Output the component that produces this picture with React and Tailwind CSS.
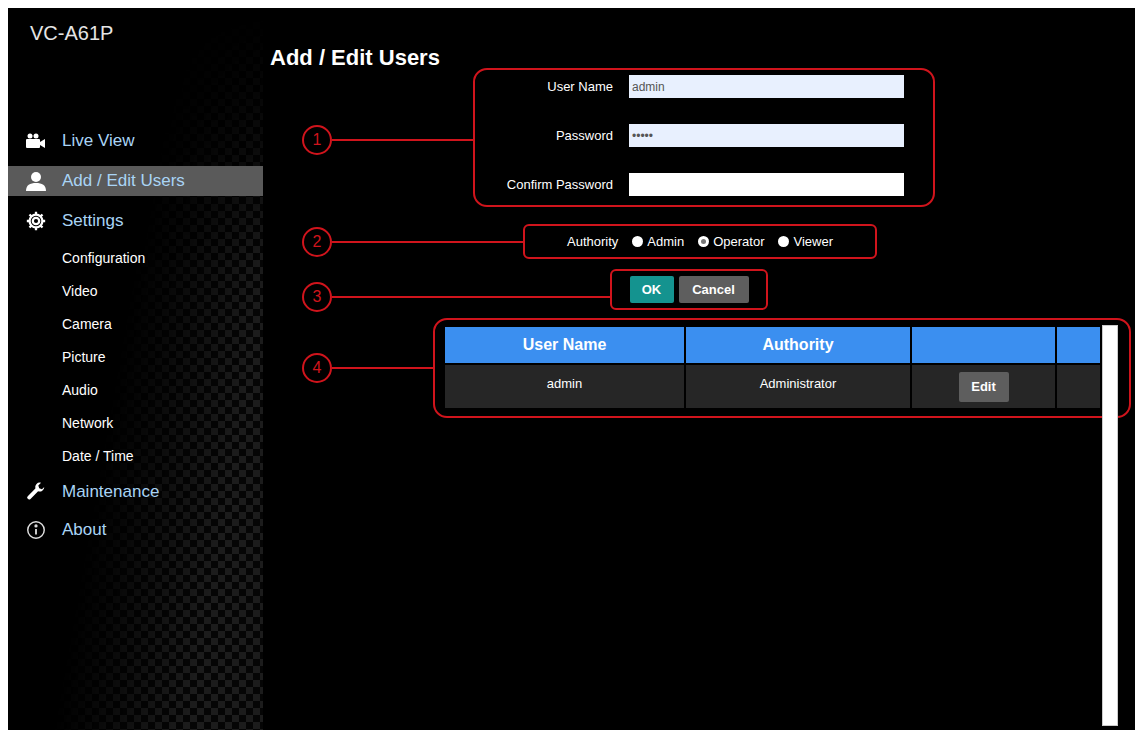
import React from 'react';

const font = { fontFamily: '"Liberation Sans", Arial, sans-serif' };

const Icon = {
  cam: (
    <svg width="22" height="16" viewBox="0 0 22 16" fill="#fff">
      <circle cx="5" cy="3" r="2.5" /><circle cx="11" cy="3" r="2.5" />
      <rect x="1" y="6" width="14" height="9" rx="1" /><path d="M15 9l5-3v9l-5-3z" />
    </svg>
  ),
  user: (
    <svg width="22" height="20" viewBox="0 0 22 20" fill="#fff">
      <circle cx="11" cy="6" r="5" /><path d="M1 20c0-6 4-8 10-8s10 2 10 8z" />
    </svg>
  ),
  gear: (
    <svg width="22" height="22" viewBox="0 0 24 24" fill="none" stroke="#fff" strokeWidth="2.5">
      <circle cx="12" cy="12" r="3.5" />
      <path d="M12 2v3M12 19v3M2 12h3M19 12h3M4.9 4.9l2.1 2.1M17 17l2.1 2.1M4.9 19.1L7 17M17 7l2.1-2.1" />
      <circle cx="12" cy="12" r="7" />
    </svg>
  ),
  wrench: (
    <svg width="22" height="22" viewBox="0 0 24 24" fill="#fff">
      <path d="M21 6.5a5 5 0 0 1-6.7 4.7L6 19.5a2 2 0 0 1-3-3l8.3-8.3A5 5 0 0 1 17.5 2l-3 3 1 3 3 1z" />
    </svg>
  ),
  info: (
    <svg width="22" height="22" viewBox="0 0 24 24" fill="none" stroke="#ddd" strokeWidth="1.6">
      <circle cx="12" cy="12" r="9" /><path d="M12 11v6" strokeWidth="2" /><circle cx="12" cy="7.5" r="1" fill="#ddd" />
    </svg>
  ),
};

function NavItem({ icon, label, active }) {
  return (
    <div className={`flex items-center h-[30px] pl-[16px] gap-[14px] ${active ? 'bg-[#5a5a5a]' : ''}`}>
      <span className="w-[24px] flex justify-center">{icon}</span>
      <span className="text-[17px] text-[#a9d4f5]">{label}</span>
    </div>
  );
}

function Circle({ n, top }) {
  return (
    <div className="absolute left-[39px] w-[30px] h-[30px] rounded-full border-2 border-[#d0141c] flex items-center justify-center text-[#d0141c] text-[16px]" style={{ top }}>
      {n}
    </div>
  );
}

function Radio({ label, dot }) {
  return (
    <span className="flex items-center gap-[4px]">
      <span className="w-[11px] h-[11px] rounded-full bg-white flex items-center justify-center">
        {dot && <span className="w-[5px] h-[5px] rounded-full bg-[#777]" />}
      </span>
      {label}
    </span>
  );
}

export default function App() {
  return (
    <div style={font} className="w-[1143px] h-[734px] bg-white p-[8px] pr-[8px] pb-[4px]">
      <div className="w-full h-full bg-black flex overflow-hidden">
        <aside className="relative w-[255px] shrink-0 overflow-hidden">
          <div className="absolute inset-0 bg-[repeating-conic-gradient(#1c1c1c_0_25%,#050505_0_50%)] bg-[length:14px_14px] [mask-image:linear-gradient(100deg,transparent_45%,black_80%)]" />
          <div className="absolute inset-0 [mask-image:linear-gradient(to_bottom,black,transparent_35%)] bg-black" />
          <div className="relative">
            <div className="pt-[10px] pl-[22px] text-[20px] text-[#e5e5e5]">VC-A61P</div>
            <div className="mt-[78px] flex flex-col gap-[10px]">
              <NavItem icon={Icon.cam} label="Live View" />
              <NavItem icon={Icon.user} label="Add / Edit Users" active />
              <NavItem icon={Icon.gear} label="Settings" />
            </div>
            <div className="flex flex-col pl-[54px] mt-[6px] text-[14px] text-white">
              {['Configuration', 'Video', 'Camera', 'Picture', 'Audio', 'Network', 'Date / Time'].map(s => (
                <div key={s} className="h-[33px] flex items-center">{s}</div>
              ))}
            </div>
            <div className="flex flex-col gap-[8px] mt-[4px]">
              <NavItem icon={Icon.wrench} label="Maintenance" />
              <NavItem icon={Icon.info} label="About" />
            </div>
          </div>
        </aside>

        <main className="relative flex-1 text-white text-[13px]">
          <h1 className="absolute left-[7px] top-[33px] text-[22px] font-bold">Add / Edit Users</h1>

          {/* form */}
          <div className="absolute left-[210px] top-[60px] w-[462px] h-[139px] border-2 border-[#d0141c] rounded-[14px]" />
          <div className="absolute left-[222px] top-[67px] flex flex-col gap-[26px]">
            {[['User Name', 'admin', 'bg-[#e8f0fe]'], ['Password', '•••••', 'bg-[#e8f0fe]'], ['Confirm Password', '', 'bg-white']].map(([l, v, bg]) => (
              <div key={l} className="flex items-center gap-[16px]">
                <span className="w-[128px] text-right">{l}</span>
                <div className={`w-[275px] h-[23px] ${bg} text-[#555] text-[12px] px-[3px] flex items-center`}>{v}</div>
              </div>
            ))}
          </div>

          {/* authority */}
          <div className="absolute left-[260px] top-[216px] w-[354px] h-[35px] border-2 border-[#d0141c] rounded-[6px] flex items-center justify-center gap-[14px]">
            <span>Authority</span>
            <Radio label="Admin" />
            <Radio label="Operator" dot />
            <Radio label="Viewer" />
          </div>

          {/* buttons */}
          <div className="absolute left-[347px] top-[261px] w-[158px] h-[41px] border-2 border-[#d0141c] rounded-[6px] flex items-center justify-center gap-[5px] font-bold">
            <span className="w-[44px] h-[27px] bg-[#14938f] rounded-[2px] flex items-center justify-center">OK</span>
            <span className="w-[70px] h-[27px] bg-[#5e5e5e] rounded-[2px] flex items-center justify-center">Cancel</span>
          </div>

          {/* table */}
          <div className="absolute left-[170px] top-[310px] w-[698px] h-[100px] border-2 border-[#d0141c] rounded-[14px]" />
          <div className="absolute left-[182px] top-[319px] w-[655px] grid grid-cols-[239px_224px_143px_43px] gap-x-[2px] gap-y-[2px]">
            <div className="h-[36px] bg-[#3b8ff0] flex items-center justify-center font-bold text-[16px]">User Name</div>
            <div className="h-[36px] bg-[#3b8ff0] flex items-center justify-center font-bold text-[16px]">Authority</div>
            <div className="h-[36px] bg-[#3b8ff0]" />
            <div className="h-[36px] bg-[#3b8ff0]" />
            <div className="h-[43px] bg-[#262626] flex justify-center pt-[9px]">admin</div>
            <div className="h-[43px] bg-[#262626] flex justify-center pt-[9px]">Administrator</div>
            <div className="h-[43px] bg-[#262626] flex items-center justify-center">
              <span className="w-[50px] h-[30px] bg-[#5e5e5e] rounded-[2px] font-bold flex items-center justify-center">Edit</span>
            </div>
            <div className="h-[43px] bg-[#262626]" />
          </div>
          <div className="absolute left-[839px] top-[317px] w-[16px] h-[401px] bg-white border border-[#ccc]" />

          {/* annotations */}
          <Circle n="1" top={117} />
          <Circle n="2" top={219} />
          <Circle n="3" top={274} />
          <Circle n="4" top={345} />
          <div className="absolute left-[69px] top-[131px] w-[141px] h-[2px] bg-[#d0141c]" />
          <div className="absolute left-[69px] top-[233px] w-[191px] h-[2px] bg-[#d0141c]" />
          <div className="absolute left-[69px] top-[288px] w-[278px] h-[2px] bg-[#d0141c]" />
          <div className="absolute left-[69px] top-[359px] w-[101px] h-[2px] bg-[#d0141c]" />
        </main>
      </div>
    </div>
  );
}
